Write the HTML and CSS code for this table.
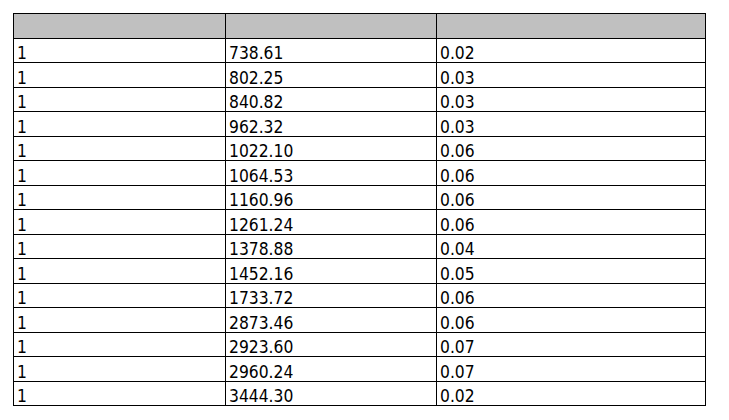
FILE: index.html
```html
<!DOCTYPE html>
<html>
<head>
<meta charset="utf-8">
<link rel="stylesheet" href="styles.css">
</head>
<body>
<table class="data">
<colgroup><col class="c1"><col class="c2"><col class="c3"></colgroup>
<thead><tr class="head"><th></th><th></th><th></th></tr></thead>
<tbody>
<tr><td>1</td><td>738.61</td><td>0.02</td></tr>
<tr><td>1</td><td>802.25</td><td>0.03</td></tr>
<tr><td>1</td><td>840.82</td><td>0.03</td></tr>
<tr><td>1</td><td>962.32</td><td>0.03</td></tr>
<tr><td>1</td><td>1022.10</td><td>0.06</td></tr>
<tr><td>1</td><td>1064.53</td><td>0.06</td></tr>
<tr><td>1</td><td>1160.96</td><td>0.06</td></tr>
<tr><td>1</td><td>1261.24</td><td>0.06</td></tr>
<tr><td>1</td><td>1378.88</td><td>0.04</td></tr>
<tr><td>1</td><td>1452.16</td><td>0.05</td></tr>
<tr><td>1</td><td>1733.72</td><td>0.06</td></tr>
<tr><td>1</td><td>2873.46</td><td>0.06</td></tr>
<tr><td>1</td><td>2923.60</td><td>0.07</td></tr>
<tr><td>1</td><td>2960.24</td><td>0.07</td></tr>
<tr><td>1</td><td>3444.30</td><td>0.02</td></tr>
</tbody>
</table>
</body>
</html>
```
FILE: styles.css
```css
html, body {
  margin: 0;
  padding: 0;
  background: #fff;
}
body {
  padding: 13px;
  font-family: "DejaVu Sans Condensed", "DejaVu Sans", sans-serif;
  font-size: 17.3px;
  color: #000;
}
.data {
  border-collapse: collapse;
  table-layout: fixed;
  width: 692px;
}
.c1 { width: 212px; }
.c2 { width: 211px; }
.c3 { width: 269px; }
.data th,
.data td {
  border: 1px solid #000;
  padding: 0 3px;
  text-align: left;
  vertical-align: bottom;
  line-height: 17px;
  font-weight: normal;
}
.head th {
  background: #c0c0c0;
  height: 24px;
}
.data tbody tr {
  height: 24.47px;
}
```
